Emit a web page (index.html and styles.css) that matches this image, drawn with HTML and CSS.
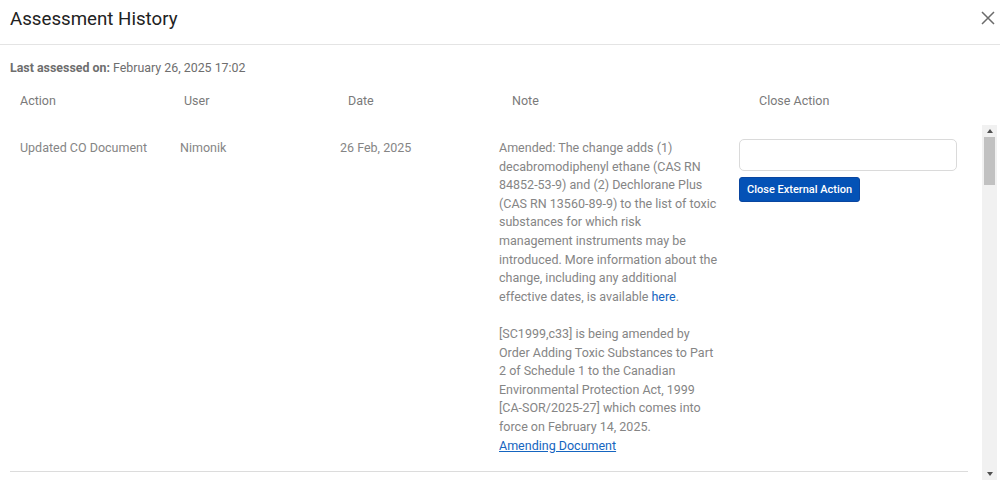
FILE: index.html
```html
<!DOCTYPE html>
<html lang="en">
<head>
<meta charset="utf-8">
<title>Assessment History</title>
<link rel="stylesheet" href="styles.css">
</head>
<body>
<div class="dialog">
  <div class="dialog-header">
    <h2 class="dialog-title">Assessment History</h2>
    <button class="close-btn" aria-label="Close">
      <svg width="14" height="14" viewBox="0 0 14 14"><path d="M1 1 L13 13 M13 1 L1 13" stroke="#6b6b6b" stroke-width="1.5" fill="none"/></svg>
    </button>
  </div>
  <div class="dialog-body">
    <div class="last-assessed"><strong>Last assessed on:</strong> February 26, 2025 17:02</div>
    <div class="table-head">
      <div>Action</div>
      <div>User</div>
      <div>Date</div>
      <div>Note</div>
      <div>Close Action</div>
    </div>
    <div class="table-scroll">
      <div class="rows">
        <div class="row">
          <div class="cell">Updated CO Document</div>
          <div class="cell">Nimonik</div>
          <div class="cell">26 Feb, 2025</div>
          <div class="cell note">
            <p>Amended: The change adds (1) decabromodiphenyl ethane (CAS RN 84852-53-9) and (2) Dechlorane Plus (CAS RN 13560-89-9) to the list of toxic substances for which risk management instruments may be introduced. More information about the change, including any additional effective dates, is available <a class="link" href="#">here</a>.</p>
            <p>[SC1999,c33] is being amended by Order Adding Toxic Substances to Part 2 of Schedule 1 to the Canadian Environmental Protection Act, 1999 [CA-SOR/2025-27] which comes into force on February 14, 2025.<br><a class="link underline" href="#">Amending Document</a></p>
          </div>
          <div class="cell close-cell">
            <input class="close-input" type="text">
            <button class="close-action-btn">Close External Action</button>
          </div>
        </div>
      </div>
      <div class="scrollbar" aria-hidden="true">
        <div class="sb-arrow"><span class="tri up"></span></div>
        <div class="sb-track">
          <div class="sb-thumb"></div>
        </div>
        <div class="sb-arrow"><span class="tri down"></span></div>
      </div>
    </div>
  </div>
</div>
</body>
</html>
```

FILE: styles.css
```css
* { box-sizing: border-box; }

html, body {
  margin: 0;
  padding: 0;
  background: #ffffff;
}

body {
  font-family: Roboto, "Liberation Sans", Arial, sans-serif;
  width: 1000px;
  height: 480px;
  overflow: hidden;
}

.dialog {
  width: 1000px;
  height: 480px;
  display: flex;
  flex-direction: column;
}

.dialog-header {
  display: flex;
  justify-content: space-between;
  align-items: flex-start;
  height: 45px;
  padding: 7px 0 0 10px;
  border-bottom: 1px solid #e4e4e4;
}

.dialog-title {
  margin: 0;
  font-size: 18.7px;
  line-height: 24px;
  font-weight: 400;
  color: #222222;
}

.close-btn {
  width: 24px;
  height: 24px;
  padding: 0;
  margin-top: -1px;
  border: none;
  background: transparent;
  display: flex;
  align-items: center;
  justify-content: center;
}

.dialog-body {
  flex: 1;
  display: flex;
  flex-direction: column;
  padding: 0 3px 0 10px;
  min-height: 0;
}

.last-assessed {
  margin-top: 15px;
  font-size: 12.4px;
  line-height: 16px;
  color: #6e6e6e;
}

.last-assessed strong {
  font-weight: 700;
}

.table-head {
  display: grid;
  grid-template-columns: 164px 164px 164px 247px 1fr;
  margin-top: 16px;
  padding: 0 0 15px 10px;
  font-size: 12.5px;
  line-height: 18px;
  color: #7a7a7a;
}

.table-scroll {
  flex: 1;
  display: flex;
  min-height: 0;
  overflow: hidden;
}

.rows {
  flex: 1;
  padding-right: 14px;
}

.row {
  display: grid;
  grid-template-columns: 160px 160px 159px 240px 1fr;
  padding: 14px 0 16px 10px;
  border-bottom: 1px solid #dcdcdc;
  font-size: 12.5px;
  line-height: 18.6px;
  color: #858585;
}

.note {
  padding-right: 21.5px;
}

.note p {
  margin: 0 0 18.6px;
}

.note p:last-child {
  margin-bottom: 0;
}

.link {
  color: #1565c0;
  text-decoration: none;
}

.link.underline {
  text-decoration: underline;
}

.close-cell {
  display: flex;
  flex-direction: column;
  align-items: flex-start;
  gap: 6px;
}

.close-input {
  width: 218px;
  height: 32px;
  border: 1px solid #dadada;
  border-radius: 5px;
  background: #ffffff;
  margin: 0;
}

.close-action-btn {
  height: 25px;
  padding: 0 7px;
  border: 1px solid #0a46a0;
  border-radius: 3px;
  background: #0452b6;
  color: #ffffff;
  font-family: Roboto, "Liberation Sans", Arial, sans-serif;
  font-size: 11px;
  font-weight: 500;
  line-height: 23px;
}

.scrollbar {
  width: 15px;
  flex: 0 0 15px;
  background: #f1f1f1;
  display: flex;
  flex-direction: column;
}

.sb-arrow {
  height: 12px;
  display: flex;
  align-items: center;
  justify-content: center;
}

.tri {
  width: 0;
  height: 0;
  border-left: 3.5px solid transparent;
  border-right: 3.5px solid transparent;
}

.tri.up {
  border-bottom: 4px solid #505050;
}

.tri.down {
  border-top: 4px solid #505050;
}

.sb-track {
  flex: 1;
  padding: 0 2px;
}

.sb-thumb {
  height: 48px;
  background: #c1c1c1;
}
```
